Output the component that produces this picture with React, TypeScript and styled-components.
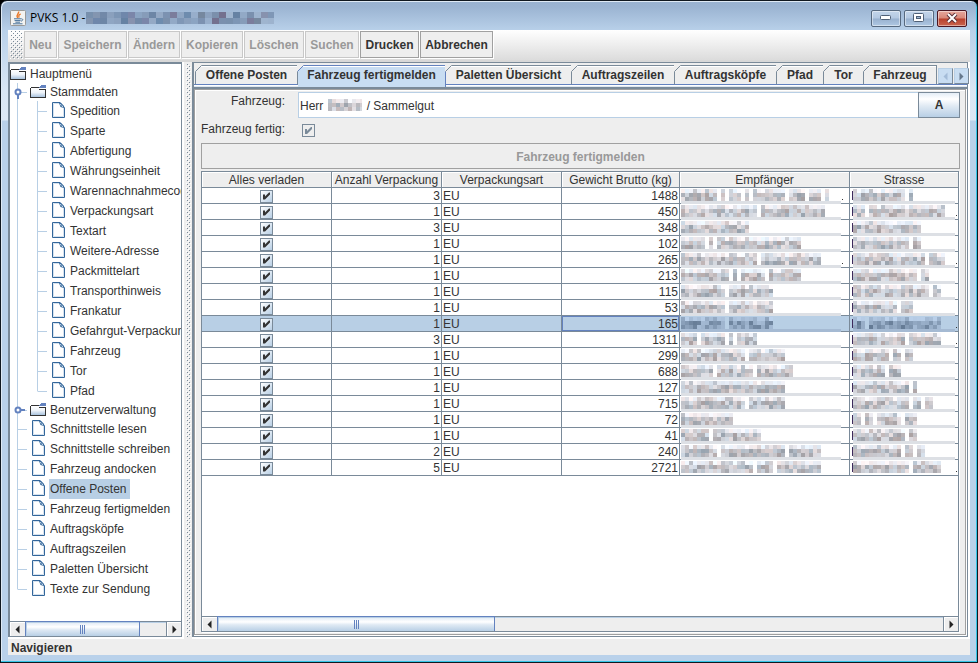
import React, { useId } from "react";
import styled, { createGlobalStyle, css } from "styled-components";

const C = {
  dark: "#7a8a99",
  gray: "#a0a0a0",
  panel: "#eeeeee",
  line: "#b8cfe5",
  accent: "#6382bf",
  text: "#333333",
};

const Global = createGlobalStyle`
  * { box-sizing: border-box; }
  body {
    margin: 0;
    background: #000;
    color: ${C.text};
    font: 12px/16px "Liberation Sans", Arial, sans-serif;
  }
  button, input { font: inherit; color: inherit; }
`;

const metalFill = "linear-gradient(#dde8f3, #ffffff 35%, #e0eaf4 55%, #b8cfe5)";

/* ---------- window frame ---------- */

const Window = styled.div`
  display: flex;
  flex-direction: column;
  min-height: 100vh;
  padding: 0 7px 7px;
  border: 1px solid #101820;
  border-radius: 7px 7px 0 0;
  background: linear-gradient(#9ab3d1 1px, #9bb4d2 6px, #b9d1ea 30px, #d9e6f4 90px, #dce8f5 119px, #b9d1ea 120px);
  box-shadow: inset -1px -1px 0 #35c4e6, inset 1px 1px 0 #dfeaf5;
`;

const TitleBar = styled.header`
  display: flex;
  align-items: center;
  height: 29px;
  padding: 5px 3px 0 2px;
`;

const Title = styled.h1`
  margin: 0 1px 0 4px;
  font: 12px/16px "Open Sans", "Noto Sans", sans-serif;
  color: #000;
  white-space: pre;
`;

const WindowButtons = styled.div`
  display: flex;
  gap: 3px;
  margin-left: auto;
`;

const WindowButton = styled.button<{ $close?: boolean }>`
  display: grid;
  place-items: center;
  width: 30px;
  height: 17px;
  padding: 0;
  border: 1px solid ${(p) => (p.$close ? "#4a1622" : "#56697f")};
  border-radius: 2px;
  background: ${(p) =>
    p.$close
      ? "linear-gradient(#e5a79d, #d98778 48%, #b8402c 52%, #c9654f)"
      : "linear-gradient(#c3d5ea, #b4c9e2 48%, #98b1cf 52%, #afc8e3)"};
  box-shadow: inset 0 0 0 1px rgba(255, 255, 255, 0.45);
`;

const Client = styled.div`
  display: flex;
  flex: 1;
  flex-direction: column;
  min-width: 0;
  background: #fff;
`;

/* ---------- toolbar ---------- */

const Toolbar = styled.div`
  display: flex;
  gap: 1px;
  height: 32px;
  padding: 1px 2px 3px;
  border-bottom: 2px solid #d8d8d8;
  background: linear-gradient(#ffffff, #dcdcdc);
`;

const Grip = styled.div`
  width: 13px;
  height: 28px;
`;

const ToolButton = styled.button<{ $width: number }>`
  flex: none;
  width: ${(p) => p.$width}px;
  height: 27px;
  padding: 1px 0 0;
  border: 1px solid ${C.gray};
  background: ${C.panel};
  box-shadow: 1px 1px 0 #fff;
  font-weight: bold;
  white-space: nowrap;
  &:disabled {
    border-color: #c8c8c8;
    color: #999;
  }
`;

/* ---------- split panes ---------- */

const Main = styled.div`
  display: flex;
  flex: 1;
  min-height: 0;
`;

const TreePane = styled.nav`
  display: flex;
  flex-direction: column;
  flex: none;
  width: 174px;
  margin-bottom: 2px;
  border: solid ${C.dark};
  border-width: 2px 1px 1px 2px;
  background: #fff;
`;

const TreeBody = styled.ul`
  flex: 1;
  margin: 0;
  padding: 1px 0 0;
  overflow: hidden;
  list-style: none;
`;

const TreeRow = styled.li<{ $folder: boolean }>`
  display: flex;
  height: ${(p) => (p.$folder ? 18 : 20)}px;
  line-height: ${(p) => (p.$folder ? 18 : 20)}px;
  svg { flex: none; }
`;

const IconBox = styled.span<{ $folder: boolean }>`
  display: flex;
  flex: none;
  width: 19px;
  padding: 1px 0 0 ${(p) => (p.$folder ? 0 : 2)}px;
`;

const TreeLabel = styled.span<{ $selected?: boolean }>`
  padding: 0 3px 0 1px;
  white-space: nowrap;
  background: ${(p) => (p.$selected ? C.line : "transparent")};
`;

const Splitter = styled.div`
  flex: none;
  width: 10px;
  padding: 2px 1px 2px 2px;
  border-left: 2px solid #fff;
  background: ${C.panel};
`;

const WorkPane = styled.main`
  display: flex;
  flex: 1;
  flex-direction: column;
  min-width: 0;
  margin: 0 2px 2px 0;
  border: solid ${C.dark};
  border-width: 1px 1px 1px 2px;
  background: ${C.panel};
`;

/* ---------- tabs ---------- */

const TabStrip = styled.div`
  display: flex;
  flex: none;
  height: 24px;
  padding: 2px 0 0 1px;
  border-bottom: 1px solid #dfe7f0;
  background: linear-gradient(${C.panel} 21px, ${C.accent} 21px, ${C.accent} 22px, #fff 22px);
`;

const Tab = styled.button<{ $active?: boolean; $width: number }>`
  position: relative;
  flex: none;
  width: ${(p) => p.$width}px;
  height: 20px;
  padding: 0;
  border: solid ${C.dark};
  border-width: 1px 1px 1px 0;
  border-bottom-color: ${C.accent};
  background: ${C.panel};
  box-shadow: inset 0 1px 0 #fff;
  font-weight: bold;
  line-height: 18px;
  white-space: nowrap;
  &:first-child { border-left-width: 1px; }
  ${(p) =>
    p.$active &&
    css`
      height: 22px;
      padding-bottom: 3px;
      border-color: ${C.accent};
      border-bottom: 0;
      background: #c8ddf2;
    `}
`;

const Corner = styled.svg`
  position: absolute;
  top: -1px;
  left: -1px;
`;

const TabScroll = styled.div`
  display: flex;
  gap: 1px;
  margin: 3px 0 0 1px;
`;

const TabScrollButton = styled.button`
  display: grid;
  place-items: center;
  width: 15px;
  height: 16px;
  padding: 0;
  border: 1px solid ${C.line};
  border-right-color: ${C.dark};
  border-bottom-color: ${C.dark};
  background: #c8ddf2;
`;

/* ---------- form ---------- */

const TabPanel = styled.section`
  display: flex;
  flex: 1;
  flex-direction: column;
  min-height: 0;
  border-top: 2px solid ${C.dark};
`;

const Inset = styled.div`
  display: flex;
  flex: 1;
  flex-direction: column;
  min-height: 0;
  padding: 2px 5px 2px 6px;
  border: 1px solid ${C.gray};
  box-shadow: inset 1px 1px 0 #fff, 1px 0 0 #fff, 0 1px 0 #fff;
  margin: 0 1px 1px 0;
`;

const Form = styled.form`
  display: grid;
  grid-template-columns: 84px 1fr 42px;
  grid-template-rows: 28px 23px;
`;

const FieldLabel = styled.label`
  height: 18px;
  line-height: 18px;
  text-align: right;
  white-space: nowrap;
`;

const FieldWrap = styled.div`
  position: relative;
  display: flex;
  margin-left: 13px;
`;

const TextField = styled.input`
  width: 100%;
  height: 26px;
  padding: 1px 1px 0;
  border: 1px solid ${C.line};
  border-right: 0;
  background: #fff;
`;

const FieldMask = styled.span`
  position: absolute;
  top: 6px;
  left: 29px;
  display: flex;
`;

const PickButton = styled.button`
  height: 26px;
  padding: 0;
  border: 1px solid ${C.dark};
  background: linear-gradient(#e4edf6, #ffffff 25%, #dfe9f3 55%, #b8cfe5);
  font-weight: bold;
`;

const Check = styled.input`
  position: relative;
  display: block;
  appearance: none;
  width: 13px;
  height: 13px;
  margin: 0 auto;
  border: 1px solid ${C.dark};
  background: linear-gradient(135deg, #ffffff, #b8cfe5);
  &:checked::after {
    content: "";
    position: absolute;
    inset: 0;
    background: ${C.text};
    clip-path: polygon(2px 4px, 4px 4px, 4px 6px, 8px 2px, 9px 2px, 9px 4px, 4px 9px, 2px 9px);
  }
  &:disabled {
    margin: 4px 0 0 4px;
    background: ${C.panel};
  }
  &:disabled:checked::after { background: ${C.dark}; }
`;

const WideButton = styled.button`
  flex: none;
  height: 26px;
  margin-bottom: 2px;
  padding: 1px 0 0;
  border: 1px solid ${C.gray};
  background: ${C.panel};
  font-weight: bold;
  &:disabled { color: #999; }
`;

/* ---------- table ---------- */

const ScrollPane = styled.div`
  display: flex;
  flex: 1;
  flex-direction: column;
  min-height: 0;
  margin-right: 1px;
  border: 1px solid ${C.dark};
  background: #fff;
  box-shadow: 1px 1px 0 #fff;
`;

const TableView = styled.div`
  flex: 1;
  overflow: hidden;
`;

const Table = styled.table`
  width: 100%;
  table-layout: fixed;
  border-collapse: separate;
  border-spacing: 0;
`;

const Th = styled.th`
  height: 16px;
  padding: 1px 0 0;
  border: solid ${C.dark};
  border-width: 0 1px 1px 0;
  background: ${C.panel};
  box-shadow: inset 1px 1px 0 #fff;
  font-weight: normal;
  line-height: 14px;
  white-space: nowrap;
  &:last-child { border-right: 0; }
`;

const Td = styled.td<{ $num?: boolean; $focus?: boolean }>`
  position: relative;
  height: 16px;
  padding: 1px 1px 0;
  border: solid ${C.dark};
  border-width: 0 1px 1px 0;
  line-height: 14px;
  text-align: ${(p) => (p.$num ? "right" : "left")};
  white-space: nowrap;
  box-shadow: ${(p) => (p.$focus ? `inset 0 0 0 1px ${C.accent}` : "none")};
  &:last-child { border-right: 0; }
`;

const Tr = styled.tr<{ $selected?: boolean }>`
  background: ${(p) => (p.$selected ? C.line : "#fff")};
`;

const CellMask = styled.span`
  position: absolute;
  inset: 0 auto auto 0;
  display: flex;
`;

/* ---------- scroll bars ---------- */

const Track = styled.div`
  display: flex;
  flex: none;
  height: 15px;
  border-top: 1px solid ${C.dark};
  background: ${C.panel};
  box-shadow: inset 0 1px 0 ${C.line};
`;

const ArrowButton = styled.button<{ $end?: boolean }>`
  display: grid;
  place-items: center;
  flex: none;
  width: 15px;
  padding: 0;
  border: 0;
  border-left: ${(p) => (p.$end ? `1px solid ${C.dark}` : "0")};
  margin-left: ${(p) => (p.$end ? "auto" : "0")};
  background: ${C.panel};
  box-shadow: inset 1px 1px 0 #fff;
`;

const Thumb = styled.div<{ $size: string }>`
  display: flex;
  align-items: center;
  justify-content: center;
  gap: 1px;
  width: ${(p) => p.$size};
  margin-top: -1px;
  border: solid ${C.accent};
  border-width: 1px 1px 0;
  background: ${metalFill};
  box-shadow: inset 1px 1px 0 ${C.line};
  i {
    width: 1px;
    height: 9px;
    background: ${C.accent};
  }
`;

const StatusBar = styled.footer`
  height: 16px;
  padding: 0 3px;
  background: ${C.panel};
  font-weight: bold;
  line-height: 18px;
`;

/* ---------- drawings ---------- */

function Dots() {
  const id = useId();
  return (
    <svg width="100%" height="100%" shapeRendering="crispEdges" aria-hidden>
      <defs>
        <pattern id={id} width="4" height="4" patternUnits="userSpaceOnUse">
          <rect x="1" width="1" height="1" fill={C.dark} />
          <rect x="2" y="1" width="1" height="1" fill="#fff" />
          <rect x="3" y="2" width="1" height="1" fill={C.dark} />
          <rect x="0" y="3" width="1" height="1" fill="#fff" />
        </pattern>
      </defs>
      <rect width="100%" height="100%" fill={`url(#${id})`} />
    </svg>
  );
}

function JavaIcon() {
  return (
    <svg width="16" height="16" viewBox="0 0 16 16" aria-hidden>
      <rect x="0.5" y="0.5" width="15" height="15" rx="1" fill="#f3f3f1" stroke="#9a9a98" />
      <path d="M8.6 1.5C9.5 3.5 5.5 4.5 7.6 8M10.6 3.8C8.6 5 8.2 5.6 9.2 7.6" fill="none" stroke="#e8792a" strokeWidth="1.4" />
      <path d="M4 8.8h7.4M4.6 10.6h6M5.4 12.2h4.6M3 13.8h9.5M11.5 8.8c2 .1 1.4 2-.6 2.4" fill="none" stroke="#48739c" strokeWidth="1" />
    </svg>
  );
}

function FolderIcon() {
  const id = useId();
  return (
    <svg width="16" height="16" viewBox="0 0 16 16" shapeRendering="crispEdges" aria-hidden>
      <defs>
        <linearGradient id={id} x1="0" y1="0" x2="0" y2="1">
          <stop offset="0" stopColor="#fff" />
          <stop offset="0.5" stopColor="#eef3f9" />
          <stop offset="1" stopColor="#a9c3de" />
        </linearGradient>
      </defs>
      <rect x="1" y="4" width="14" height="9" fill={`url(#${id})`} />
      <path d="M0 4h1v9H0zM1 3h8v1H1zM0 13h16v1H0zM15 5h1v9h-1zM9 5h6v1H9z" fill="#333" />
      <path d="M11 1h5v1h-5zM10 2h6v2h-6zM9 3h1v1h-1z" fill={C.accent} />
    </svg>
  );
}

function LeafIcon() {
  return (
    <svg width="13" height="16" viewBox="0 0 13 16" aria-hidden>
      <path d="M0.5 0.5H8L12.5 5.5V15.5H0.5Z" fill="#fff" stroke="#33669a" />
      <path d="M1.5 14.5V1.5H7.5M11.5 6V14.5H1.5" fill="none" stroke="#d5e2ef" />
      <path d="M7 1L8.5 5L12 6L12 4L8.5 0.5Z" fill="#33669a" />
      <path d="M8.5 2L9 3.5M10 3.5L10.5 5" stroke="#d5e2ef" />
    </svg>
  );
}

type GuideKind = "line" | "tee" | "end" | "open" | "closed";

function Guide({ kind, height }: { kind: GuideKind; height: number }) {
  const mid = height / 2;
  return (
    <svg width="20" height={height} aria-hidden>
      <path
        d={`M7.5 0V${kind === "end" ? mid + 0.5 : height}${kind === "line" ? "" : `M8 ${mid + 0.5}H17`}`}
        stroke={C.line}
        fill="none"
      />
      {kind === "open" && <path d="M8 9V16" stroke={C.accent} strokeWidth="2" />}
      {kind === "closed" && <path d="M8 9H15" stroke={C.accent} strokeWidth="2" />}
      {(kind === "open" || kind === "closed") && (
        <circle cx="8" cy="9" r="2.5" fill="#fff" stroke={C.accent} strokeWidth="2" />
      )}
    </svg>
  );
}

function Arrow({ dir, color = "#222" }: { dir: "left" | "right"; color?: string }) {
  return (
    <svg width="5" height="9" viewBox="0 0 5 9" aria-hidden>
      <path d={dir === "left" ? "M4.5 0.5V8.5L0.5 4.5Z" : "M0.5 0.5V8.5L4.5 4.5Z"} fill={color} />
    </svg>
  );
}

function random(seed: number) {
  let s = seed * 7919 + 13;
  return () => {
    s = (s * 1103515245 + 12345) % 2147483648;
    return s / 2147483648;
  };
}

/* Pixelated stand-in for private text: word lengths are counted in blocks. */
function WordMosaic({ words, seed, dark }: { words: number[]; seed: number; dark?: boolean }) {
  const rnd = random(seed);
  const cells: React.ReactNode[] = [];
  const paint = (x: number, y: number, light: number, strength: number) => {
    const v = light + rnd() * strength;
    const tint = (rnd() - 0.5) * 24;
    const base = dark ? [v - 60, v - 38, v - 12] : [v + tint, v, v + 6 - tint / 2];
    const fill = `rgb(${base.map((n) => Math.min(255, Math.round(n))).join(",")})`;
    cells.push(<rect key={`${x}-${y}`} x={x} y={y} width="4" height="4" fill={fill} />);
  };
  let x = 1;
  words.forEach((count) => {
    for (let i = 0; i < count; i++) {
      if (i === 0 || rnd() > 0.65) paint(x, 1, 190, 50);
      else paint(x, 1, 225, 28);
      paint(x, 5, 160, 65);
      paint(x, 9, 160, 65);
      x += 4;
    }
    x += 4;
  });
  return <>{cells}</>;
}

function Redacted({
  words,
  seed,
  width,
  dots,
  initial,
  selected,
  last,
}: {
  words: number[];
  seed: number;
  width: number;
  dots?: boolean;
  initial?: boolean;
  selected?: boolean;
  last?: boolean;
}) {
  const start = initial ? 2 : 0;
  return (
    <svg width={width + 6} height="16" shapeRendering="crispEdges" aria-hidden>
      {!last && <rect x={start + 1} y="13" width={width - start} height="3" fill={selected ? "#a5bad3" : "#dde0e5"} />}
      {initial && <rect x="2" y="3" width="1" height="9" fill="#3d2a5c" />}
      <g transform={`translate(${start} 0)`}>
        <WordMosaic words={words} seed={seed} dark={selected} />
      </g>
      {dots && <rect x={width + 2} y="11" width="1" height="1" fill={C.text} />}
    </svg>
  );
}

const titleTones = [
  "#7890ad", "#8395b0", "#7289a8", "#8aa0bd", "#7d96b5", "#6f87ab", "#7b86a9", "#8ba4c2", "#869cb9",
  "#6d86a6", "#94a9c5", "#7c92b1", "#7b7d9c", "#8fa6c3", "#6e8cae", "#97aecb", "#76889f", "#8ca2bf",
  "#7b90ac", "#74718f", "#9fb5cf", "#6682a3", "#92a9c6", "#7a90ae", "#9db3ce", "#8792ae", "#7f97b6",
];

function TitleMask() {
  return (
    <svg width="188" height="12" shapeRendering="crispEdges" aria-hidden>
      {titleTones.map((c, i) => (
        <g key={i}>
          <rect x={i * 7} y="0" width="7" height="6" fill={c} />
          <rect x={i * 7} y="6" width="7" height="6" fill={titleTones[(i * 4 + 1) % titleTones.length]} />
        </g>
      ))}
    </svg>
  );
}

function TabCorner({ active }: { active?: boolean }) {
  return (
    <Corner width="7" height="7" aria-hidden>
      <path d="M0 0H7L0 7Z" fill={C.panel} />
      <path d="M0.5 6.5L6.5 0.5" stroke={active ? C.accent : C.dark} />
    </Corner>
  );
}

function ScrollBar({ size, label }: { size: string; label: string }) {
  return (
    <Track role="group" aria-label={label}>
      <ArrowButton aria-label="Nach links"><Arrow dir="left" /></ArrowButton>
      <Thumb $size={size}><i /><i /><i /></Thumb>
      <ArrowButton $end aria-label="Nach rechts"><Arrow dir="right" /></ArrowButton>
    </Track>
  );
}

/* ---------- data ---------- */

const tools = [
  { label: "Neu", width: 33, disabled: true },
  { label: "Speichern", width: 69, disabled: true },
  { label: "Ändern", width: 52, disabled: true },
  { label: "Kopieren", width: 62, disabled: true },
  { label: "Löschen", width: 60, disabled: true },
  { label: "Suchen", width: 54, disabled: true },
  { label: "Drucken", width: 59 },
  { label: "Abbrechen", width: 73 },
];

type Node = { label: string; icon: "folder" | "leaf"; guides: GuideKind[]; selected?: boolean };

const masterData = [
  "Spedition", "Sparte", "Abfertigung", "Währungseinheit", "Warennachnahmecode", "Verpackungsart", "Textart",
  "Weitere-Adresse", "Packmittelart", "Transporthinweis", "Frankatur", "Gefahrgut-Verpackung", "Fahrzeug", "Tor", "Pfad",
];
const actions = [
  "Schnittstelle lesen", "Schnittstelle schreiben", "Fahrzeug andocken", "Offene Posten", "Fahrzeug fertigmelden",
  "Auftragsköpfe", "Auftragszeilen", "Paletten Übersicht", "Texte zur Sendung",
];

const nodes: Node[] = [
  { label: "Hauptmenü", icon: "folder", guides: [] },
  { label: "Stammdaten", icon: "folder", guides: ["open"] },
  ...masterData.map((label, i): Node => ({
    label, icon: "leaf", guides: ["line", i === masterData.length - 1 ? "end" : "tee"],
  })),
  { label: "Benutzerverwaltung", icon: "folder", guides: ["closed"] },
  ...actions.map((label, i): Node => ({
    label, icon: "leaf", guides: [i === actions.length - 1 ? "end" : "tee"], selected: label === "Offene Posten",
  })),
];

const tabs = [
  { label: "Offene Posten", width: 103 },
  { label: "Fahrzeug fertigmelden", width: 148 },
  { label: "Paletten Übersicht", width: 126 },
  { label: "Auftragszeilen", width: 103 },
  { label: "Auftragsköpfe", width: 102 },
  { label: "Pfad", width: 47 },
  { label: "Tor", width: 40 },
  { label: "Fahrzeug", width: 73 },
];

type Row = [count: number, weight: number, name: number[], street: number[], nameDots?: boolean, streetDots?: boolean];

const rows: Row[] = [
  [3, 1488, [9, 1, 3, 1, 8, 4, 3, 1], [13, 1], true],
  [1, 450, [19, 16], [3, 19], false, true],
  [3, 348, [17], [17]],
  [1, 102, [6, 1, 21], [14, 2]],
  [1, 265, [19, 15], [18, 4], true, true],
  [1, 213, [12, 1, 6, 8], [16, 2]],
  [1, 115, [11, 11], [19, 2]],
  [1, 53, [11, 11], [11, 3]],
  [1, 165, [11, 11], [3, 18], false, true],
  [3, 1311, [4, 6, 1, 5], [13, 8], false, true],
  [1, 299, [16, 9], [9, 2, 2]],
  [1, 688, [8, 9, 9], [8, 3]],
  [1, 127, [26], [14, 1]],
  [1, 715, [16, 9], [14, 2, 2]],
  [1, 72, [13], [2, 2, 6, 3]],
  [1, 41, [7, 12], [13, 2]],
  [2, 240, [9, 16, 8], [12, 2, 2]],
  [5, 2721, [18, 4, 11], [14, 7], false, true],
];
const selectedRow = 8;
const fit = (words: number[], max: number) => {
  let left = max;
  return words.map((w) => {
    const n = Math.max(1, Math.min(w, left));
    left -= n + 1;
    return n;
  });
};

/* ---------- page ---------- */

export default function App() {
  return (
    <>
      <Global />
      <Window>
        <TitleBar>
          <JavaIcon />
          <Title>PVKS 1.0 -</Title>
          <TitleMask />
          <WindowButtons>
            <WindowButton aria-label="Minimieren">
              <svg width="12" height="6" aria-hidden><rect x="0.5" y="0.5" width="10" height="4" rx="1" fill="#fff" stroke="#4f6076" /></svg>
            </WindowButton>
            <WindowButton aria-label="Maximieren">
              <svg width="12" height="10" aria-hidden>
                <rect x="0.5" y="0.5" width="10" height="8" rx="1" fill="#fff" stroke="#4f6076" />
                <rect x="3.5" y="3.5" width="4" height="2" fill="#9fb7d3" stroke="#4f6076" />
              </svg>
            </WindowButton>
            <WindowButton $close aria-label="Schließen">
              <svg width="12" height="10" aria-hidden>
                <path d="M2 1L10 9M10 1L2 9" stroke="#5a3038" strokeWidth="4" />
                <path d="M2 1L10 9M10 1L2 9" stroke="#fff" strokeWidth="2" />
              </svg>
            </WindowButton>
          </WindowButtons>
        </TitleBar>
        <Client>
          <Toolbar role="toolbar">
            <Grip><Dots /></Grip>
            {tools.map((t) => (
              <ToolButton key={t.label} $width={t.width} disabled={t.disabled}>{t.label}</ToolButton>
            ))}
          </Toolbar>
          <Main>
            <TreePane aria-label="Hauptmenü">
              <TreeBody>
                {nodes.map((n) => {
                  const folder = n.icon === "folder";
                  return (
                    <TreeRow key={n.label + n.guides.length} $folder={folder}>
                      {n.guides.map((g, i) => <Guide key={i} kind={g} height={folder ? 18 : 20} />)}
                      <IconBox $folder={folder}>{folder ? <FolderIcon /> : <LeafIcon />}</IconBox>
                      <TreeLabel $selected={n.selected}>{n.label}</TreeLabel>
                    </TreeRow>
                  );
                })}
              </TreeBody>
              <ScrollBar size="67%" label="Menü verschieben" />
            </TreePane>
            <Splitter><Dots /></Splitter>
            <WorkPane>
              <TabStrip role="tablist">
                {tabs.map((t, i) => (
                  <Tab key={t.label} role="tab" aria-selected={i === 1} $active={i === 1} $width={t.width}>
                    <TabCorner active={i === 1} />
                    {t.label}
                  </Tab>
                ))}
                <TabScroll>
                  <TabScrollButton aria-label="Vorherige Reiter"><Arrow dir="left" color="#a3bcd8" /></TabScrollButton>
                  <TabScrollButton aria-label="Weitere Reiter"><Arrow dir="right" color="#66788c" /></TabScrollButton>
                </TabScroll>
              </TabStrip>
              <TabPanel role="tabpanel">
                <Inset>
                  <Form>
                    <FieldLabel htmlFor="vehicle">Fahrzeug:</FieldLabel>
                    <FieldWrap>
                      <TextField id="vehicle" defaultValue={"Herr" + " ".repeat(13) + "/ Sammelgut"} />
                      <FieldMask>
                        <svg width="35" height="13" shapeRendering="crispEdges" aria-hidden>
                          <WordMosaic words={[9]} seed={5} />
                        </svg>
                      </FieldMask>
                    </FieldWrap>
                    <PickButton type="button">A</PickButton>
                    <FieldLabel htmlFor="done">Fahrzeug fertig:</FieldLabel>
                    <FieldWrap>
                      <Check id="done" type="checkbox" defaultChecked disabled />
                    </FieldWrap>
                  </Form>
                  <WideButton disabled>Fahrzeug fertigmelden</WideButton>
                  <ScrollPane>
                    <TableView>
                      <Table>
                        <colgroup>
                          <col width="130" />
                          <col width="110" />
                          <col width="120" />
                          <col width="118" />
                          <col width="170" />
                          <col />
                        </colgroup>
                        <thead>
                          <tr>
                            {["Alles verladen", "Anzahl Verpackung", "Verpackungsart", "Gewicht Brutto (kg)", "Empfänger", "Strasse"].map((h) => (
                              <Th key={h} scope="col">{h}</Th>
                            ))}
                          </tr>
                        </thead>
                        <tbody>
                          {rows.map(([count, weight, name, street, nameDots, streetDots], i) => {
                            const selected = i === selectedRow;
                            const last = i === rows.length - 1;
                            return (
                              <Tr key={i} $selected={selected}>
                                <Td><Check type="checkbox" defaultChecked aria-label="Alles verladen" /></Td>
                                <Td $num>{count}</Td>
                                <Td>EU</Td>
                                <Td $num $focus={selected}>{weight}</Td>
                                <Td>
                                  <CellMask>
                                    <Redacted words={fit(name, 38)} seed={i + 1} width={160} dots={nameDots} selected={selected} last={last} />
                                  </CellMask>
                                </Td>
                                <Td>
                                  <CellMask>
                                    <Redacted words={fit(street, 24)} seed={i + 40} width={104} dots={streetDots} initial selected={selected} last={last} />
                                  </CellMask>
                                </Td>
                              </Tr>
                            );
                          })}
                        </tbody>
                      </Table>
                    </TableView>
                    <ScrollBar size="278px" label="Tabelle verschieben" />
                  </ScrollPane>
                </Inset>
              </TabPanel>
            </WorkPane>
          </Main>
          <StatusBar>Navigieren</StatusBar>
        </Client>
      </Window>
    </>
  );
}
